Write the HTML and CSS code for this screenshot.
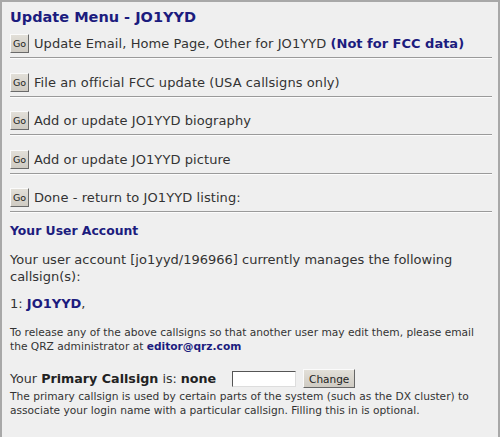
FILE: index.html
```html
<!DOCTYPE html>
<html>
<head>
<meta charset="utf-8">
<link rel="stylesheet" href="styles.css">
</head>
<body>
<div class="frame">
  <h1 class="title">Update Menu - JO1YYD</h1>
  <div class="menu">
    <div class="row"><span class="go">Go</span><span class="label">Update Email, Home Page, Other for JO1YYD <span class="note">(Not for FCC data)</span></span></div>
    <div class="row"><span class="go">Go</span><span class="label">File an official FCC update (USA callsigns only)</span></div>
    <div class="row"><span class="go">Go</span><span class="label">Add or update JO1YYD biography</span></div>
    <div class="row"><span class="go">Go</span><span class="label">Add or update JO1YYD picture</span></div>
    <div class="row"><span class="go">Go</span><span class="label">Done - return to JO1YYD listing:</span></div>
  </div>
  <h2 class="subtitle">Your User Account</h2>
  <p class="text account">Your user account [jo1yyd/196966] currently manages the following callsign(s):</p>
  <p class="text calls">1: <span class="call">JO1YYD</span>,</p>
  <p class="small release">To release any of the above callsigns so that another user may edit them, please email the QRZ administrator at <span class="mail">editor@qrz.com</span></p>
  <div class="primary">
    <span class="plabel">Your <b>Primary Callsign</b> is: <b>none</b></span>
    <span class="input"></span>
    <span class="btn">Change</span>
  </div>
  <p class="small info">The primary callsign is used by certain parts of the system (such as the DX cluster) to associate your login name with a particular callsign. Filling this in is optional.</p>
</div>
</body>
</html>
```
FILE: styles.css
```css
html, body { margin: 0; padding: 0; background: #efefef; }
body { font-family: "DejaVu Sans", Verdana, sans-serif; color: #333; }
.frame {
  width: 500px; height: 437px; box-sizing: border-box;
  border: 2px solid #a8a8a8; border-bottom: none;
  padding: 5px 8px 0 8px; background: #efefef;
}
.title { margin: 0; font-size: 14.5px; font-weight: bold; color: #1c1c7e; line-height: 20px; }
.menu { margin-top: 7px; }
.row {
  display: flex; align-items: center; gap: 5px;
  height: 19px; padding-bottom: 4px; margin-bottom: 14.5px;
  border-bottom: 1px solid #9a9a9a; box-shadow: 0 1px 0 #fcfcfc;
  width: 482px;
}
.row:last-child { margin-bottom: 0; }
.go {
  width: 19px; height: 19px; box-sizing: border-box; flex: none;
  background: linear-gradient(#e2dfd8, #cfcbc3); border: 1px solid; border-color: #fbfbfb #6a6a6a #6a6a6a #fbfbfb;
  font-size: 9.5px; color: #222; display: flex; align-items: center; justify-content: center;
}
.label { font-size: 13px; letter-spacing: 0.08px; color: #333; }
.note { color: #1c1c7e; font-weight: bold; letter-spacing: 0; }
.subtitle { margin: 10px 0 0; font-size: 12.4px; font-weight: bold; color: #1c1c7e; line-height: 18px; }
.text { margin: 0; font-size: 13px; line-height: 17px; }
.account { margin-top: 11px; }
.calls { margin-top: 10px; }
.call { color: #1c1c7e; font-weight: bold; }
.small { font-size: 10.65px; line-height: 14px; margin: 0; }
.release { margin-top: 14px; }
.mail { color: #1c1c7e; font-weight: bold; }
.primary { display: flex; align-items: center; margin-top: 14.5px; height: 20px; }
.plabel { font-size: 12.7px; color: #333; }
.plabel b { font-weight: bold; color: #222; }
.input { width: 64px; height: 16px; box-sizing: border-box; background: #fff; border: 1px solid; border-color: #555 #ddd #ddd #555; margin-left: 16px; }
.btn {
  margin-left: 7px; width: 52px; height: 19px; box-sizing: border-box;
  font-size: 10.5px; background: linear-gradient(#e2dfd8, #cfcbc3); border: 1px solid; border-color: #fbfbfb #666 #666 #fbfbfb;
  color: #222; display: flex; align-items: center; justify-content: center;
}
.info { margin-top: 1px; }
```
